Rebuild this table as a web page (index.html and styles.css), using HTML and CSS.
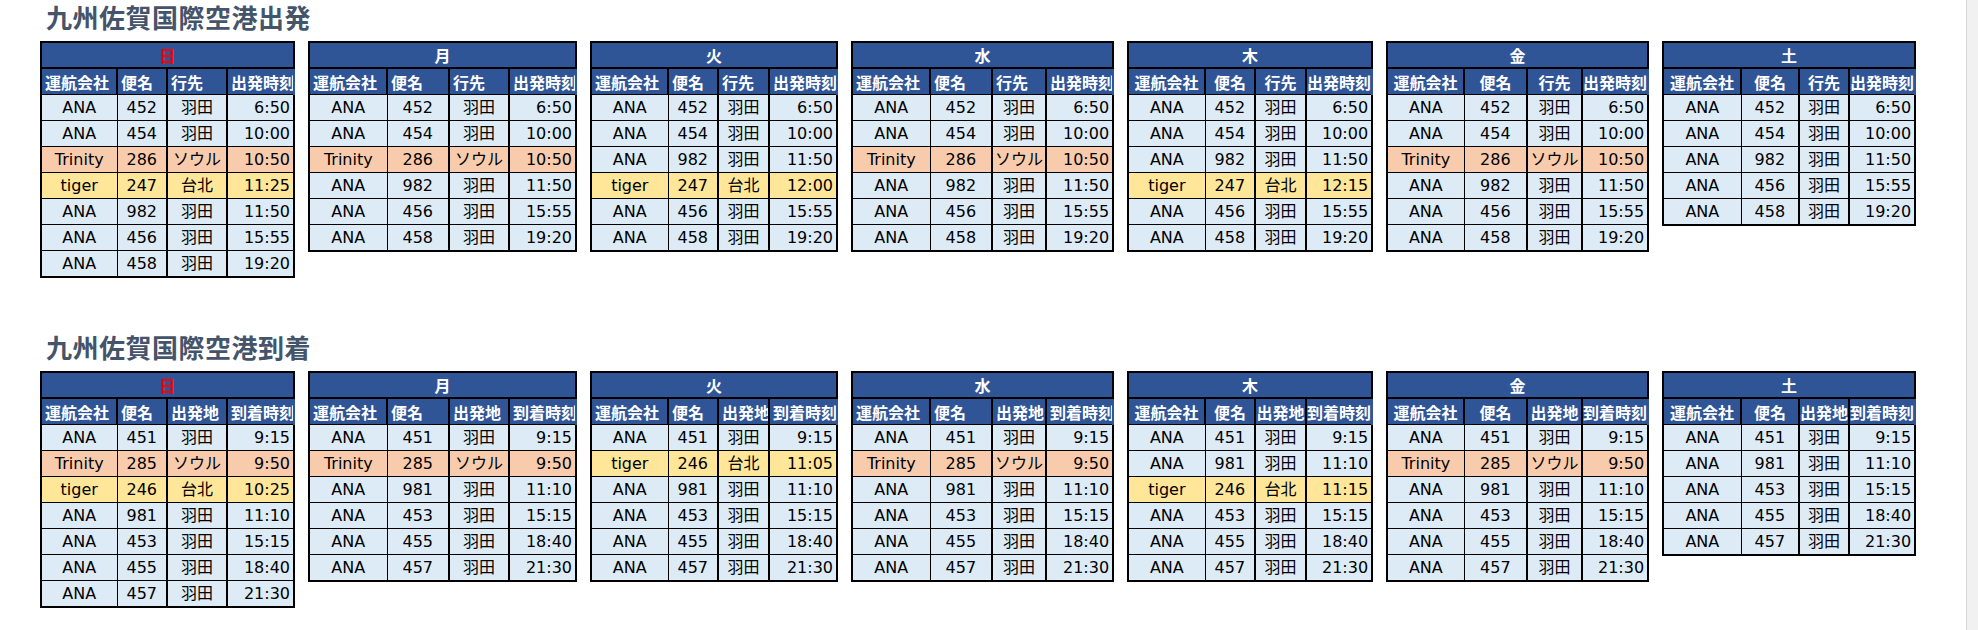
FILE: index.html
```html
<!DOCTYPE html>
<html lang="ja">
<head>
<meta charset="utf-8">
<title>九州佐賀国際空港 時刻表</title>
<link rel="stylesheet" href="styles.css">
</head>
<body>
<div class="page">
<main class="main">

<section class="sec">
<h1 class="title">九州佐賀国際空港出発</h1>
<div class="tables">

<table class="tt w-sun hl">
<colgroup><col class="c1"><col class="c2"><col class="c3"><col class="c4"></colgroup>
<thead>
<tr class="day"><th colspan="4" class="sun">日</th></tr>
<tr class="hd"><th>運航会社</th><th>便名</th><th>行先</th><th>出発時刻</th></tr>
</thead>
<tbody>
<tr class="ana"><td>ANA</td><td>452</td><td>羽田</td><td>6:50</td></tr>
<tr class="ana"><td>ANA</td><td>454</td><td>羽田</td><td>10:00</td></tr>
<tr class="trn"><td>Trinity</td><td>286</td><td>ソウル</td><td>10:50</td></tr>
<tr class="tgr"><td>tiger</td><td>247</td><td>台北</td><td>11:25</td></tr>
<tr class="ana"><td>ANA</td><td>982</td><td>羽田</td><td>11:50</td></tr>
<tr class="ana"><td>ANA</td><td>456</td><td>羽田</td><td>15:55</td></tr>
<tr class="ana"><td>ANA</td><td>458</td><td>羽田</td><td>19:20</td></tr>
</tbody>
</table>

<table class="tt w-mon hl">
<colgroup><col class="c1"><col class="c2"><col class="c3"><col class="c4"></colgroup>
<thead>
<tr class="day"><th colspan="4">月</th></tr>
<tr class="hd"><th>運航会社</th><th>便名</th><th>行先</th><th>出発時刻</th></tr>
</thead>
<tbody>
<tr class="ana"><td>ANA</td><td>452</td><td>羽田</td><td>6:50</td></tr>
<tr class="ana"><td>ANA</td><td>454</td><td>羽田</td><td>10:00</td></tr>
<tr class="trn"><td>Trinity</td><td>286</td><td>ソウル</td><td>10:50</td></tr>
<tr class="ana"><td>ANA</td><td>982</td><td>羽田</td><td>11:50</td></tr>
<tr class="ana"><td>ANA</td><td>456</td><td>羽田</td><td>15:55</td></tr>
<tr class="ana"><td>ANA</td><td>458</td><td>羽田</td><td>19:20</td></tr>
</tbody>
</table>

<table class="tt w-tue hl">
<colgroup><col class="c1"><col class="c2"><col class="c3"><col class="c4"></colgroup>
<thead>
<tr class="day"><th colspan="4">火</th></tr>
<tr class="hd"><th>運航会社</th><th>便名</th><th>行先</th><th>出発時刻</th></tr>
</thead>
<tbody>
<tr class="ana"><td>ANA</td><td>452</td><td>羽田</td><td>6:50</td></tr>
<tr class="ana"><td>ANA</td><td>454</td><td>羽田</td><td>10:00</td></tr>
<tr class="ana"><td>ANA</td><td>982</td><td>羽田</td><td>11:50</td></tr>
<tr class="tgr"><td>tiger</td><td>247</td><td>台北</td><td>12:00</td></tr>
<tr class="ana"><td>ANA</td><td>456</td><td>羽田</td><td>15:55</td></tr>
<tr class="ana"><td>ANA</td><td>458</td><td>羽田</td><td>19:20</td></tr>
</tbody>
</table>

<table class="tt w-wed hl">
<colgroup><col class="c1"><col class="c2"><col class="c3"><col class="c4"></colgroup>
<thead>
<tr class="day"><th colspan="4">水</th></tr>
<tr class="hd"><th>運航会社</th><th>便名</th><th>行先</th><th>出発時刻</th></tr>
</thead>
<tbody>
<tr class="ana"><td>ANA</td><td>452</td><td>羽田</td><td>6:50</td></tr>
<tr class="ana"><td>ANA</td><td>454</td><td>羽田</td><td>10:00</td></tr>
<tr class="trn"><td>Trinity</td><td>286</td><td>ソウル</td><td>10:50</td></tr>
<tr class="ana"><td>ANA</td><td>982</td><td>羽田</td><td>11:50</td></tr>
<tr class="ana"><td>ANA</td><td>456</td><td>羽田</td><td>15:55</td></tr>
<tr class="ana"><td>ANA</td><td>458</td><td>羽田</td><td>19:20</td></tr>
</tbody>
</table>

<table class="tt w-thu hc">
<colgroup><col class="c1"><col class="c2"><col class="c3"><col class="c4"></colgroup>
<thead>
<tr class="day"><th colspan="4">木</th></tr>
<tr class="hd"><th>運航会社</th><th>便名</th><th>行先</th><th>出発時刻</th></tr>
</thead>
<tbody>
<tr class="ana"><td>ANA</td><td>452</td><td>羽田</td><td>6:50</td></tr>
<tr class="ana"><td>ANA</td><td>454</td><td>羽田</td><td>10:00</td></tr>
<tr class="ana"><td>ANA</td><td>982</td><td>羽田</td><td>11:50</td></tr>
<tr class="tgr"><td>tiger</td><td>247</td><td>台北</td><td>12:15</td></tr>
<tr class="ana"><td>ANA</td><td>456</td><td>羽田</td><td>15:55</td></tr>
<tr class="ana"><td>ANA</td><td>458</td><td>羽田</td><td>19:20</td></tr>
</tbody>
</table>

<table class="tt w-fri hc">
<colgroup><col class="c1"><col class="c2"><col class="c3"><col class="c4"></colgroup>
<thead>
<tr class="day"><th colspan="4">金</th></tr>
<tr class="hd"><th>運航会社</th><th>便名</th><th>行先</th><th>出発時刻</th></tr>
</thead>
<tbody>
<tr class="ana"><td>ANA</td><td>452</td><td>羽田</td><td>6:50</td></tr>
<tr class="ana"><td>ANA</td><td>454</td><td>羽田</td><td>10:00</td></tr>
<tr class="trn"><td>Trinity</td><td>286</td><td>ソウル</td><td>10:50</td></tr>
<tr class="ana"><td>ANA</td><td>982</td><td>羽田</td><td>11:50</td></tr>
<tr class="ana"><td>ANA</td><td>456</td><td>羽田</td><td>15:55</td></tr>
<tr class="ana"><td>ANA</td><td>458</td><td>羽田</td><td>19:20</td></tr>
</tbody>
</table>

<table class="tt w-sat hc">
<colgroup><col class="c1"><col class="c2"><col class="c3"><col class="c4"></colgroup>
<thead>
<tr class="day"><th colspan="4">土</th></tr>
<tr class="hd"><th>運航会社</th><th>便名</th><th>行先</th><th>出発時刻</th></tr>
</thead>
<tbody>
<tr class="ana"><td>ANA</td><td>452</td><td>羽田</td><td>6:50</td></tr>
<tr class="ana"><td>ANA</td><td>454</td><td>羽田</td><td>10:00</td></tr>
<tr class="ana"><td>ANA</td><td>982</td><td>羽田</td><td>11:50</td></tr>
<tr class="ana"><td>ANA</td><td>456</td><td>羽田</td><td>15:55</td></tr>
<tr class="ana"><td>ANA</td><td>458</td><td>羽田</td><td>19:20</td></tr>
</tbody>
</table>

</div>
</section>

<section class="sec">
<h1 class="title">九州佐賀国際空港到着</h1>
<div class="tables">

<table class="tt w-sun hl">
<colgroup><col class="c1"><col class="c2"><col class="c3"><col class="c4"></colgroup>
<thead>
<tr class="day"><th colspan="4" class="sun">日</th></tr>
<tr class="hd"><th>運航会社</th><th>便名</th><th>出発地</th><th>到着時刻</th></tr>
</thead>
<tbody>
<tr class="ana"><td>ANA</td><td>451</td><td>羽田</td><td>9:15</td></tr>
<tr class="trn"><td>Trinity</td><td>285</td><td>ソウル</td><td>9:50</td></tr>
<tr class="tgr"><td>tiger</td><td>246</td><td>台北</td><td>10:25</td></tr>
<tr class="ana"><td>ANA</td><td>981</td><td>羽田</td><td>11:10</td></tr>
<tr class="ana"><td>ANA</td><td>453</td><td>羽田</td><td>15:15</td></tr>
<tr class="ana"><td>ANA</td><td>455</td><td>羽田</td><td>18:40</td></tr>
<tr class="ana"><td>ANA</td><td>457</td><td>羽田</td><td>21:30</td></tr>
</tbody>
</table>

<table class="tt w-mon hl">
<colgroup><col class="c1"><col class="c2"><col class="c3"><col class="c4"></colgroup>
<thead>
<tr class="day"><th colspan="4">月</th></tr>
<tr class="hd"><th>運航会社</th><th>便名</th><th>出発地</th><th>到着時刻</th></tr>
</thead>
<tbody>
<tr class="ana"><td>ANA</td><td>451</td><td>羽田</td><td>9:15</td></tr>
<tr class="trn"><td>Trinity</td><td>285</td><td>ソウル</td><td>9:50</td></tr>
<tr class="ana"><td>ANA</td><td>981</td><td>羽田</td><td>11:10</td></tr>
<tr class="ana"><td>ANA</td><td>453</td><td>羽田</td><td>15:15</td></tr>
<tr class="ana"><td>ANA</td><td>455</td><td>羽田</td><td>18:40</td></tr>
<tr class="ana"><td>ANA</td><td>457</td><td>羽田</td><td>21:30</td></tr>
</tbody>
</table>

<table class="tt w-tue hl">
<colgroup><col class="c1"><col class="c2"><col class="c3"><col class="c4"></colgroup>
<thead>
<tr class="day"><th colspan="4">火</th></tr>
<tr class="hd"><th>運航会社</th><th>便名</th><th>出発地</th><th>到着時刻</th></tr>
</thead>
<tbody>
<tr class="ana"><td>ANA</td><td>451</td><td>羽田</td><td>9:15</td></tr>
<tr class="tgr"><td>tiger</td><td>246</td><td>台北</td><td>11:05</td></tr>
<tr class="ana"><td>ANA</td><td>981</td><td>羽田</td><td>11:10</td></tr>
<tr class="ana"><td>ANA</td><td>453</td><td>羽田</td><td>15:15</td></tr>
<tr class="ana"><td>ANA</td><td>455</td><td>羽田</td><td>18:40</td></tr>
<tr class="ana"><td>ANA</td><td>457</td><td>羽田</td><td>21:30</td></tr>
</tbody>
</table>

<table class="tt w-wed hl">
<colgroup><col class="c1"><col class="c2"><col class="c3"><col class="c4"></colgroup>
<thead>
<tr class="day"><th colspan="4">水</th></tr>
<tr class="hd"><th>運航会社</th><th>便名</th><th>出発地</th><th>到着時刻</th></tr>
</thead>
<tbody>
<tr class="ana"><td>ANA</td><td>451</td><td>羽田</td><td>9:15</td></tr>
<tr class="trn"><td>Trinity</td><td>285</td><td>ソウル</td><td>9:50</td></tr>
<tr class="ana"><td>ANA</td><td>981</td><td>羽田</td><td>11:10</td></tr>
<tr class="ana"><td>ANA</td><td>453</td><td>羽田</td><td>15:15</td></tr>
<tr class="ana"><td>ANA</td><td>455</td><td>羽田</td><td>18:40</td></tr>
<tr class="ana"><td>ANA</td><td>457</td><td>羽田</td><td>21:30</td></tr>
</tbody>
</table>

<table class="tt w-thu hc">
<colgroup><col class="c1"><col class="c2"><col class="c3"><col class="c4"></colgroup>
<thead>
<tr class="day"><th colspan="4">木</th></tr>
<tr class="hd"><th>運航会社</th><th>便名</th><th>出発地</th><th>到着時刻</th></tr>
</thead>
<tbody>
<tr class="ana"><td>ANA</td><td>451</td><td>羽田</td><td>9:15</td></tr>
<tr class="ana"><td>ANA</td><td>981</td><td>羽田</td><td>11:10</td></tr>
<tr class="tgr"><td>tiger</td><td>246</td><td>台北</td><td>11:15</td></tr>
<tr class="ana"><td>ANA</td><td>453</td><td>羽田</td><td>15:15</td></tr>
<tr class="ana"><td>ANA</td><td>455</td><td>羽田</td><td>18:40</td></tr>
<tr class="ana"><td>ANA</td><td>457</td><td>羽田</td><td>21:30</td></tr>
</tbody>
</table>

<table class="tt w-fri hc">
<colgroup><col class="c1"><col class="c2"><col class="c3"><col class="c4"></colgroup>
<thead>
<tr class="day"><th colspan="4">金</th></tr>
<tr class="hd"><th>運航会社</th><th>便名</th><th>出発地</th><th>到着時刻</th></tr>
</thead>
<tbody>
<tr class="ana"><td>ANA</td><td>451</td><td>羽田</td><td>9:15</td></tr>
<tr class="trn"><td>Trinity</td><td>285</td><td>ソウル</td><td>9:50</td></tr>
<tr class="ana"><td>ANA</td><td>981</td><td>羽田</td><td>11:10</td></tr>
<tr class="ana"><td>ANA</td><td>453</td><td>羽田</td><td>15:15</td></tr>
<tr class="ana"><td>ANA</td><td>455</td><td>羽田</td><td>18:40</td></tr>
<tr class="ana"><td>ANA</td><td>457</td><td>羽田</td><td>21:30</td></tr>
</tbody>
</table>

<table class="tt w-sat hc">
<colgroup><col class="c1"><col class="c2"><col class="c3"><col class="c4"></colgroup>
<thead>
<tr class="day"><th colspan="4">土</th></tr>
<tr class="hd"><th>運航会社</th><th>便名</th><th>出発地</th><th>到着時刻</th></tr>
</thead>
<tbody>
<tr class="ana"><td>ANA</td><td>451</td><td>羽田</td><td>9:15</td></tr>
<tr class="ana"><td>ANA</td><td>981</td><td>羽田</td><td>11:10</td></tr>
<tr class="ana"><td>ANA</td><td>453</td><td>羽田</td><td>15:15</td></tr>
<tr class="ana"><td>ANA</td><td>455</td><td>羽田</td><td>18:40</td></tr>
<tr class="ana"><td>ANA</td><td>457</td><td>羽田</td><td>21:30</td></tr>
</tbody>
</table>

</div>
</section>

</main>
<div class="scrollbar"></div>
</div>
</body>
</html>
```
FILE: styles.css
```css
html, body {
  margin: 0;
  padding: 0;
  background: #ffffff;
}

.page {
  display: flex;
  width: 1978px;
  height: 630px;
  overflow: hidden;
}

.main {
  flex: 1;
  min-width: 0;
}

.scrollbar {
  width: 11px;
  flex: none;
  background: #f1f1f1;
  border-left: 1px solid #d6d6d6;
}

.sec + .sec {
  margin-top: 52px;
}

.title {
  margin: 0;
  padding: 1px 0 8px 46px;
  font-family: "Noto Sans CJK JP", sans-serif;
  font-weight: 700;
  font-size: 26px;
  line-height: 32px;
  letter-spacing: 0.5px;
  color: #44546a;
}

.tables {
  display: flex;
  align-items: flex-start;
  gap: 13px;
  padding-left: 40px;
}

.tt {
  border-collapse: collapse;
  table-layout: fixed;
  border: 2px solid #000;
  font-family: "DejaVu Sans", "Noto Sans CJK JP", sans-serif;
  font-size: 16px;
  color: #000;
}

.tt th,
.tt td {
  padding: 0;
  white-space: nowrap;
  overflow: hidden;
}

/* day row */
.tt .day th {
  height: 24px;
  background: #2f5597;
  color: #ffffff;
  font-family: "Noto Sans CJK JP", sans-serif;
  font-weight: 700;
  font-size: 16px;
  line-height: 20px;
  text-align: center;
  border-bottom: 2px solid #000;
}

.tt .day th.sun {
  color: #ff0000;
}

/* column header row */
.tt .hd th {
  height: 25px;
  background: #2f5597;
  color: #ffffff;
  font-family: "Noto Sans CJK JP", sans-serif;
  font-weight: 700;
  font-size: 16px;
  line-height: 20px;
  border-left: 2px solid #000;
  border-bottom: 1px solid #000;
}

.tt .hd th:last-child {
  border-right: 2px solid #2f5597;
}

.tt.hl .hd th {
  text-align: left;
  padding-left: 3px;
}

.tt.hc .hd th {
  text-align: center;
}

/* data rows */
.tt td {
  height: 25px;
  line-height: 20px;
  text-align: center;
  border-top: 1px solid #000;
  border-bottom: 1px solid #000;
  border-left: 2px solid #000;
}

.tt td:nth-child(2) {
  border-left: 1px solid #000;
}

.tt td:last-child {
  text-align: right;
  padding-right: 3px;
}

.tt tr.ana td { background: #ddebf7; }
.tt tr.trn td { background: #f8cbad; }
.tt tr.tgr td { background: #ffe699; }

.tt tbody tr:last-child td {
  border-bottom: 2px solid #000;
}

/* column widths per day */
.w-sun { width: 253px; }
.w-sun .c1 { width: 76px; }
.w-sun .c2 { width: 50px; }
.w-sun .c3 { width: 60px; }
.w-sun .c4 { width: 67px; }

.w-mon { width: 267px; }
.w-mon .c1 { width: 78px; }
.w-mon .c2 { width: 62px; }
.w-mon .c3 { width: 60px; }
.w-mon .c4 { width: 67px; }

.w-tue { width: 246px; }
.w-tue .c1 { width: 77px; }
.w-tue .c2 { width: 50px; }
.w-tue .c3 { width: 51px; }
.w-tue .c4 { width: 68px; }

.w-wed { width: 261px; }
.w-wed .c1 { width: 78px; }
.w-wed .c2 { width: 62px; }
.w-wed .c3 { width: 54px; }
.w-wed .c4 { width: 67px; }

.w-thu { width: 244px; }
.w-thu .c1 { width: 77px; }
.w-thu .c2 { width: 50px; }
.w-thu .c3 { width: 51px; }
.w-thu .c4 { width: 66px; }

.w-fri { width: 261px; }
.w-fri .c1 { width: 77px; }
.w-fri .c2 { width: 63px; }
.w-fri .c3 { width: 55px; }
.w-fri .c4 { width: 66px; }

.w-sat { width: 252px; }
.w-sat .c1 { width: 78px; }
.w-sat .c2 { width: 58px; }
.w-sat .c3 { width: 50px; }
.w-sat .c4 { width: 66px; }
```
